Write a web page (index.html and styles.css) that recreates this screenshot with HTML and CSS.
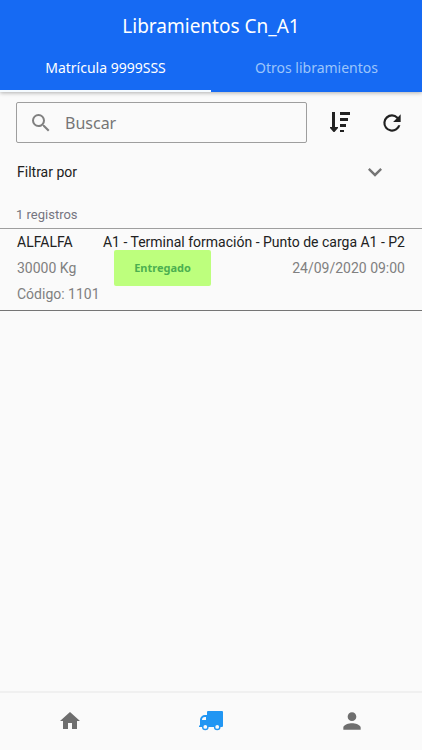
FILE: index.html
```html
<!DOCTYPE html>
<html lang="es">
<head>
    <meta charset="UTF-8">
    <meta name="viewport" content="width=device-width, initial-scale=1.0">
    <title>Libramientos</title>
    <link rel="stylesheet" href="styles.css">
</head>
<body>

<header>
    <h1>Libramientos Cn_A1</h1>
    <nav class="tabs">
        <a href="#matricula" class="active">Matrícula 9999SSS</a>
        <a href="#otros">Otros libramientos</a>
    </nav>
</header>

<main>
    <!-- Buscador -->
    <form class="search">
        <label class="search-box">
            <svg width="24" height="24" viewBox="0 0 24 24" aria-hidden="true"><path d="M15.5 14h-.79l-.28-.27A6.47 6.47 0 0 0 16 9.5 6.5 6.5 0 1 0 9.5 16c1.61 0 3.09-.59 4.23-1.57l.27.28v.79l5 4.99L20.49 19l-4.99-5zm-6 0C7.01 14 5 11.99 5 9.5S7.01 5 9.5 5 14 7.01 14 9.5 11.99 14 9.5 14z"/></svg>
            <input type="text" name="buscar" placeholder="Buscar" aria-label="Buscar">
        </label>
        <button type="button" class="icon-button" aria-label="Ordenar">
            <svg width="22" height="22" viewBox="0 0 22 22" aria-hidden="true"><path d="M3 0h3v15h3v1l-3.5 4h-1L1 16v-1h2zM11 0h10v3H11zM11 6h8v3h-8zM11 12h6v3h-6zM11 18h4v2h-4z"/></svg>
        </button>
        <button type="button" class="icon-button" aria-label="Actualizar">
            <svg width="26" height="26" viewBox="0 0 24 24" aria-hidden="true"><path d="M17.65 6.35A7.96 7.96 0 0 0 12 4a8 8 0 1 0 7.73 10h-2.08A6 6 0 1 1 12 6c1.66 0 3.14.69 4.22 1.78L13 11h7V4z"/></svg>
        </button>
    </form>

    <button type="button" class="filter">
        Filtrar por
        <svg width="28" height="28" viewBox="0 0 24 24" aria-hidden="true"><path d="M16.59 8.59 12 13.17 7.41 8.59 6 10l6 6 6-6z"/></svg>
    </button>

    <p class="count">1 registros</p>

    <!-- Listado -->
    <article class="item">
        <div class="row title">
            <span>ALFALFA</span>
            <span>A1 - Terminal formación - Punto de carga A1 - P2</span>
        </div>
        <div class="row middle">
            <span>30000 Kg</span>
            <span class="badge">Entregado</span>
            <span class="date">24/09/2020 09:00</span>
        </div>
        <div class="row">
            <span>Código: 1101</span>
        </div>
    </article>
</main>

<nav class="bottom-nav">
    <a href="#inicio" aria-label="Inicio">
        <svg width="24" height="24" viewBox="0 0 24 24" aria-hidden="true"><path d="M10 20v-6h4v6h5v-8h3L12 3 2 12h3v8z"/></svg>
    </a>
    <a href="#libramientos" class="active" aria-label="Libramientos">
        <svg width="24" height="20" viewBox="0 0 24 20" aria-hidden="true"><path fill-rule="evenodd" d="M9 0h14a1 1 0 0 1 1 1v14a1 1 0 0 1-1 1h-1.5a3.3 3.3 0 0 1-6.6 0H9.600a3.300 3.300 0 0 1-6.600 0H0v-1.500h1V9a5 5 0 0 1 5-5h2V1a1 1 0 0 1 1-1zM6 6a3 3 0 0 0-3 3H7V6zM6.300 14a1.900 1.900 0 1 0 0 3.800 1.900 1.900 0 0 0 0-3.800zM18.200 14a1.900 1.900 0 1 0 0 3.800 1.900 1.900 0 0 0 0-3.800z"/></svg>
    </a>
    <a href="#perfil" aria-label="Perfil">
        <svg width="26" height="26" viewBox="0 0 24 24" aria-hidden="true"><path d="M12 12c2.21 0 4-1.79 4-4s-1.79-4-4-4-4 1.79-4 4 1.79 4 4 4zm0 2c-2.67 0-8 1.34-8 4v2h16v-2c0-2.66-5.33-4-8-4z"/></svg>
    </a>
</nav>

</body>
</html>
```

FILE: styles.css
```css
* {
    box-sizing: border-box;
}
body {
    font-family: Roboto, Arial, sans-serif;
    font-size: 14px;
    background-color: #fafafa;
    color: #212121;
    margin: 0;
    min-height: 100vh;
    display: flex;
    flex-direction: column;
}
svg {
    display: block;
    fill: currentColor;
}
button {
    font: inherit;
    color: inherit;
    background: none;
    border: none;
    padding: 0;
    cursor: pointer;
}

/* Cabecera */
header {
    background-color: #166af3;
    color: white;
    font-family: "Noto Sans", sans-serif;
    text-align: center;
    box-shadow: 0 1px 4px rgba(0, 0, 0, 0.3);
}
h1 {
    margin: 0;
    font-size: 19px;
    font-weight: 400;
    line-height: 52px;
}
.tabs {
    display: flex;
}
.tabs a {
    flex: 1;
    height: 40px;
    line-height: 32px;
    font-size: 14px;
    color: #9cc5fb;
    text-decoration: none;
    border-bottom: 2px solid transparent;
}
.tabs a.active {
    color: white;
    border-bottom-color: #f5fbff;
}

main {
    flex: 1;
}

/* Buscador */
.search {
    display: flex;
    align-items: center;
    gap: 28px;
    padding: 10px 18px 0 16px;
}
.search-box {
    flex: 1;
    display: flex;
    align-items: center;
    gap: 12px;
    height: 41px;
    margin-right: -6px;
    padding: 0 12px;
    border: 1px solid #9e9e9e;
    border-radius: 2px;
    color: #808080;
}
.search-box input {
    flex: 1;
    min-width: 0;
    border: none;
    outline: none;
    padding: 0;
    background: none;
    font-family: "Noto Sans", sans-serif;
    font-size: 16px;
}
.search-box input::placeholder {
    color: #757575;
    opacity: 1;
}

.filter {
    display: flex;
    align-items: center;
    justify-content: space-between;
    width: 100%;
    height: 58px;
    padding: 0 33px 0 17px;
}
.filter svg {
    color: #757575;
}
.count {
    margin: 0;
    padding: 0 16px;
    line-height: 27px;
    font-size: 13px;
    color: #757580;
}

/* Registro del listado */
.item {
    padding: 0 17px 3px;
    border-top: 1px solid #9e9e9e;
    border-bottom: 1px solid #757575;
}
.row {
    display: flex;
    align-items: center;
    justify-content: space-between;
    height: 26px;
    color: #808080;
}
.row.title {
    color: #212121;
}
.row.middle {
    display: grid;
    grid-template-columns: 1fr 1fr 2fr;
}
.badge {
    margin: -5px 0;
    line-height: 36px;
    background-color: #bdff7d;
    color: #4caf50;
    border-radius: 2px;
    font-family: "Noto Sans", sans-serif;
    font-size: 11px;
    font-weight: 700;
    text-align: center;
}
.date {
    text-align: right;
}

/* Barra inferior */
.bottom-nav {
    display: flex;
    height: 59px;
    padding-bottom: 2px;
    border-top: 2px solid #f0f0f0;
}
.bottom-nav a {
    flex: 1;
    display: flex;
    align-items: center;
    justify-content: center;
    color: #6e6e6e;
}
.bottom-nav a.active {
    color: #2196f3;
}
```
